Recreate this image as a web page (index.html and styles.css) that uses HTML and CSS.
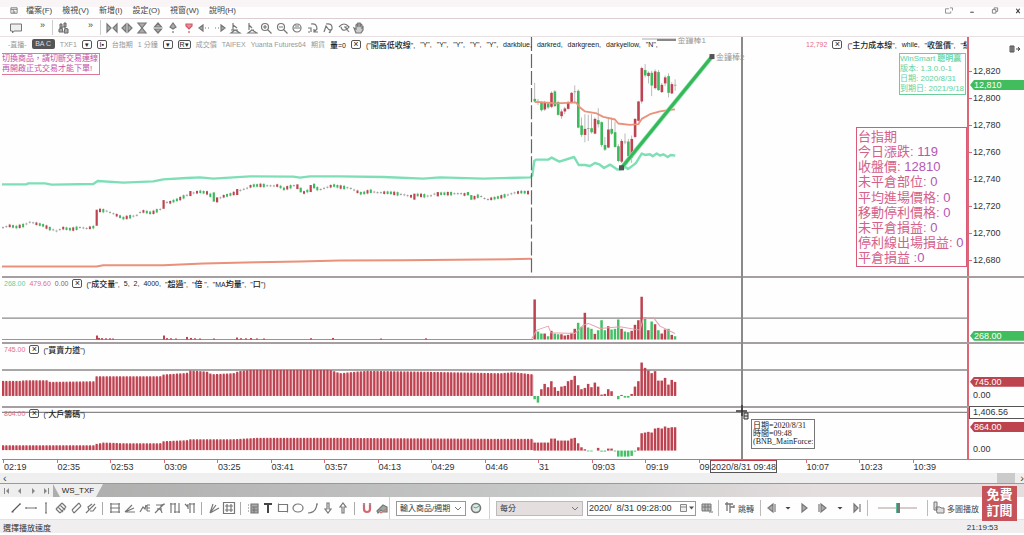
FILE: index.html
```html
<!DOCTYPE html>
<html lang="zh-Hant">
<head>
<meta charset="utf-8">
<title>WS_TXF</title>
<link rel="stylesheet" href="styles.css">
</head>
<body>
<div class="topband"></div>
<header class="menubar">
  <svg class="appicon" viewBox="0 0 10 9"><path d="M1 1h8v7H1zM1 3h8M4 3v5M6 5v3" fill="none" stroke="#666"/></svg>
  <nav class="menus">
    <button>檔案(F)</button><button>檢視(V)</button><button>新增(I)</button><button>設定(O)</button><button>視窗(W)</button><button>說明(H)</button>
  </nav>
  <div class="winbtns">
    <button aria-label="切換"><svg viewBox="0 0 10 8"><path d="M7 5v2H1V2h4M6 1h3v3" fill="none" stroke="#888"/></svg></button>
    <button aria-label="最小化"><svg viewBox="0 0 10 8"><path d="M3 6h4" stroke="#555" stroke-width="1.3"/></svg></button>
    <button aria-label="還原"><svg viewBox="0 0 10 8"><path d="M2 3h4v4H2zM4 3V1h4v4H6" fill="none" stroke="#777"/></svg></button>
    <button aria-label="關閉"><svg viewBox="0 0 10 8"><path d="M3 2l4 5M7 2L3 7" stroke="#444" stroke-width="1.3"/></svg></button>
  </div>
</header>
<div class="toolbar">
  <div class="tgroup short">
    <button aria-label="註解"><svg viewBox="0 0 14 14"><path d="M1.500 3h11v7H5l-1.500 2V10h-2z" fill="#eee" stroke="#777"/></svg></button><span>»</span>
  </div>
  <div class="tgroup short">
    <button aria-label="搜尋"><svg viewBox="0 0 14 14"><path d="M3 3h2v4H3zM7 2h2v4H7zM2 8l3-1 1 4H2zM8 7l3 1v4H7zM5 6h3" fill="#aaa" stroke="#666"/></svg></button><span>»</span>
  </div>
  <div class="tgroup icons" id="topicons"></div>
</div>

<main class="chart">
  <section class="pane price">
    <div class="plot">
      <svg id="price" viewBox="0 37 965 238" preserveAspectRatio="none"></svg>
      <div class="legend">
        <div class="lg">
          <span class="dim">-直播-</span><span class="badge">BA C</span><span class="dim">TXF1</span><button class="mini">▾</button><button class="mini">I▪</button><span class="dim">台指期</span><span class="dim">1 分鐘</span><button class="mini">▾</button><button class="mini wide">R▾</button><span class="dim">成交價</span><span class="dim">TAIFEX</span><span class="dim">Yuanta Futures64</span><span class="dim">期貨</span><span><b>量</b>=0</span><button class="mini x">×</button><span>("<b>開高低收線</b>",</span><span>"Y",</span><span>"Y",</span><span>"Y",</span><span>"Y",</span><span>"Y",</span><span>darkblue,</span><span>darkred,</span><span>darkgreen,</span><span>darkyellow,</span><span>"N",</span>
        </div>
        <div class="lg right">
          <span class="red">12,792</span><button class="mini x">×</button><span>("<b>主力成本線</b>",</span><span>while,</span><span>"<b>收盤價</b>",</span><span>"<b>紅</b>"</span>
        </div>
      </div>
      <div class="note">切換商品，請切斷交易連線<br>再開啟正式交易才能下單!</div>
      <div class="bar1">金鐘棒1</div>
      <div class="bar2">金鐘棒2</div>
      <div class="about"><p>WinSmart <b>聰明贏</b></p><p>版本: 1.3.0.0-1</p><p>日期: 2020/8/31</p><p>到期日: 2021/9/18</p></div>
      <ul class="info">
        <li>台指期</li><li>今日漲跌: <em>119</em></li><li>收盤價: <em>12810</em></li><li>未平倉部位: <em>0</em></li><li>平均進場價格: <em>0</em></li><li>移動停利價格: <em>0</em></li><li>未平倉損益: <em>0</em></li><li>停利線出場損益: <em>0</em></li><li>平倉損益 :<em>0</em></li>
      </ul>
    </div>
    <div class="scale">
      <svg class="pin" viewBox="0 0 12 8"><path d="M1 1h4v6H1zM3 1v6M7 4h4M9 2l2 2-2 2" fill="#999" stroke="#555"/></svg>
      <ol><li>12,820</li><li>12,800</li><li>12,780</li><li>12,760</li><li>12,740</li><li>12,720</li><li>12,700</li><li>12,680</li></ol>
      <span class="tag green t1">12,810</span>
    </div>
  </section>
  <section class="pane volume">
    <div class="plot">
      <svg id="volume" viewBox="0 278 965 64" preserveAspectRatio="none"></svg>
      <div class="legend sub"><span class="grn">268.00</span><span class="red">479.60</span><span class="mar">0.00</span><button class="mini x">×</button><span>("<b>成交量</b>",</span><span>5,</span><span>2,</span><span>4000,</span><span>"<b>超過</b>",</span><span>"<b>倍</b> ",</span><span>"MA<b>均量</b>",</span><span>"<b>口</b>")</span></div>
    </div>
    <div class="scale"><span class="tag green t2">268.00</span></div>
  </section>
  <section class="pane power">
    <div class="plot">
      <svg id="power" viewBox="0 344 965 62" preserveAspectRatio="none"></svg>
      <div class="legend sub"><span class="red">745.00</span><button class="mini x">×</button><span>("<b>買賣力道</b>")</span></div>
    </div>
    <div class="scale"><span class="tag crim t3">745.00</span><span class="zero z3">0.00</span></div>
  </section>
  <section class="pane force">
    <div class="plot">
      <svg id="force" viewBox="0 408 965 51" preserveAspectRatio="none"></svg>
      <div class="legend sub"><span class="red">864.00</span><button class="mini x">×</button><span>("<b>大戶籌碼</b>")</span></div>
    </div>
    <div class="scale"><span class="cursorval">1,406.56</span><span class="tag crim t4">864.00</span><span class="zero z4">0.00</span></div>
  </section>
  <div class="timeaxis">
    <ol><li>02:19</li><li>02:35</li><li>02:53</li><li>03:09</li><li>03:25</li><li>03:41</li><li>03:57</li><li>04:13</li><li>04:29</li><li>04:46</li><li>31</li><li>09:03</li><li>09:19</li><li>09</li><li></li><li>10:07</li><li>10:23</li><li>10:39</li></ol>
    <span class="cursortime">2020/8/31 09:48</span>
  </div>
  <div class="crosshair"></div>
  <svg class="cursor" viewBox="0 0 14 16"><path d="M0 6h11M6 0v11" stroke="#333" stroke-width="1.5"/><path d="M8 8h4v6H8zM8 11h4" fill="#ddd" stroke="#333"/></svg>
  <div class="tip">日期=2020/8/31<br>時間=09:48<br>(BNB_MainForce:</div>
</main>

<div class="scroller"><button aria-label="向左">‹</button><span class="thumb"></span><button aria-label="向右">›</button></div>
<div class="tabs">
  <div class="tabnav">
    <button aria-label="第一頁"><svg viewBox="0 0 8 8"><path d="M1.500 1v6" stroke="#888"/><path d="M6 1v6L3 4z" fill="#888"/></svg></button>
    <button aria-label="上一頁"><svg viewBox="0 0 8 8"><path d="M5 1v6L2 4z" fill="#888"/></svg></button>
    <button aria-label="下一頁"><svg viewBox="0 0 8 8"><path d="M3 1v6l3-3z" fill="#888"/></svg></button>
    <button aria-label="最後頁"><svg viewBox="0 0 8 8"><path d="M6.500 1v6" stroke="#888"/><path d="M2 1v6l3-3z" fill="#888"/></svg></button>
  </div>
  <button class="tab">WS_TXF</button>
</div>
<footer class="toolbar bottom">
  <div class="tgroup icons" id="drawicons"></div>
  <div class="tgroup sym">
    <select aria-label="商品"><option>輸入商品/週期</option></select>
    <button aria-label="時間"><svg viewBox="0 0 14 14"><circle cx="7" cy="7" r="4.500" fill="#dfe8e2" stroke="#777" stroke-width="1.600"/><path d="M4.500 6l2.500 1 3-2" fill="none" stroke="#4a9" /></svg></button>
  </div>
  <div class="tgroup play">
    <select class="step" aria-label="間隔"><option>每分</option></select>
    <span class="datebox"><input aria-label="日期時間" value="2020/  8/31 09:28:00"><svg viewBox="0 0 16 10"><path d="M1.500 1.500h6v7h-6zM1 4h7" fill="#eee" stroke="#888"/><path d="M10 3.500h5L12.500 6.500z" fill="#555"/></svg></span>
    <button aria-label="圖表"><svg viewBox="0 0 14 14"><path d="M2 3h9v7H2zM2 6h9M5 3v7M8 3v7M9 11h4" fill="#bbb" stroke="#777"/></svg></button>
    <button class="label sep"><svg viewBox="0 0 14 14"><path d="M2 3h8M4 1v9M7 3v3h4M7 6v6M11 4v3" fill="none" stroke="#777" stroke-width="1.300"/></svg>跳轉</button>
    <span class="transport" id="transport"></span>
    <input class="speed" type="range" aria-label="播放速度" value="50">
    <button class="label sep"><svg viewBox="0 0 14 14"><path d="M2 1h3v8H2zM4 6h4l1 1h3v5H5z" fill="#ddd" stroke="#777"/></svg>多圖播放</button>
  </div>
</footer>
<div class="status"><span>選擇播放速度</span><time>21:19:53</time></div>
<div class="endband"></div>
<a class="subscribe" href="#">免費<br>訂閱</a>
<script src="app.js"></script>
</body>
</html>
```
FILE: styles.css
```css
* { box-sizing: border-box; }
body { margin: 0; min-height: 100vh; display: flex; flex-direction: column; position: relative; background: #fefefe; color: #444; font-family: "Liberation Sans", "Noto Sans CJK TC", sans-serif; font-size: 8px; overflow-x: hidden; }
button { border: 0; padding: 0; background: none; color: inherit; font: inherit; display: inline-flex; align-items: center; justify-content: center; }
b { font-weight: 500; font-size: 8px; }
svg { display: block; }
ol, ul, p { list-style: none; margin: 0; padding: 0; }
.topband { height: 7px; background: #f9f5f7; flex: none; }
.endband { height: 2px; flex: none; }
.menubar { height: 12px; display: flex; align-items: flex-start; border-bottom: 1px solid #dccdd0; padding-left: 9px; flex: none; }
.appicon { width: 10px; height: 7px; margin-right: 7px; }
.menus { display: flex; gap: 10px; line-height: 8px; }
.menus button { height: 8px; line-height: 8px; }
.winbtns { margin-left: auto; display: flex; gap: 13px; padding-right: 1px; }
.winbtns svg { width: 10px; height: 7px; }
.toolbar { height: 18px; display: flex; align-items: center; border-bottom: 1px solid #e6e0e2; padding-left: 5px; flex: none; }
.tgroup { display: flex; align-items: center; }
.toolbar svg { width: 14px; height: 14px; }
.short { width: 48px; height: 15px; justify-content: space-between; align-items: flex-start; padding: 1px 7px 0 4px; border-right: 1px solid #ccc; }
.short span { font-size: 9px; line-height: 8px; }
.icons button { width: 15px; }
#topicons { padding-left: 3px; display: grid; grid-template-columns: repeat(17, 1fr); width: 266px; }
.chart { flex: 1; display: grid; grid-template-rows: 240fr 66fr 64fr 51fr 14px; position: relative; min-height: 435px; margin-left: 2px; }
.pane { display: grid; grid-template-columns: 1fr 57px; min-height: 0; border-bottom: 2px solid #a59fa1; }
.force { border-bottom: 0; }
.plot { position: relative; min-width: 0; overflow: hidden; }
.plot > svg { width: 100%; height: 100%; position: absolute; inset: 0; }
.scale { position: relative; border-left: 2px solid #df6675; font-size: 9px; color: #333; }
.scale ol { padding-top: 21px; }
.scale li { height: 27px; line-height: 27px; padding-left: 4px; position: relative; }
.scale li::before { content: ""; position: absolute; left: 0; top: 13px; width: 3px; height: 1px; background: #d67; }
.pin { position: absolute; right: 3px; top: 8px; width: 12px; height: 8px; }
.tag { position: absolute; left: 1px; right: 0; height: 10px; line-height: 10px; padding-left: 4px; color: #fff; clip-path: polygon(0 50%, 4px 0, 100% 0, 100% 100%, 4px 100%); }
.green { background: #42bd5d; }
.crim { background: #bd434f; }
.t1 { top: 43px; }
.t2 { bottom: 1px; }
.t3 { top: 33px; }
.t4 { top: 14px; }
.zero { position: absolute; left: 4px; line-height: 10px; }
.z3 { top: 46px; }
.z4 { top: 36px; }
.cursorval { position: absolute; left: 0; right: 0; top: -2px; height: 13px; line-height: 11px; padding-left: 3px; border: 1px solid #555; border-right: 0; background: #fff; }
.legend { position: absolute; left: 0; right: 0; top: 0; display: flex; justify-content: space-between; height: 14px; font-size: 7px; color: #222; white-space: pre; }
.lg { display: flex; align-items: center; gap: 5px; padding-left: 6px; }
.right { width: 161px; overflow: hidden; padding-left: 0; flex: none; }
.sub { justify-content: flex-start; align-items: center; gap: 4px; padding-left: 2px; height: 12px; }
.dim { color: #999; }
.red { color: #e46d8b; }
.grn { color: #5ed29a; }
.mar { color: #a05060; }
.badge { background: #555; color: #ddd; border-radius: 2px; width: 23px; height: 10px; line-height: 10px; text-align: center; }
.mini { width: 10px; height: 9px; border: 1px solid #555; border-radius: 2px; color: #222; font-size: 7px; line-height: 7px; flex: none; }
.x { font-size: 9px; }
.wide { width: 13px; }
.note { position: absolute; left: -1px; top: 16px; border: 1px solid #df7896; color: #c252a6; font-size: 8px; line-height: 10px; white-space: nowrap; padding-right: 1px; }
.bar1, .bar2 { position: absolute; color: #999; font-size: 8px; line-height: 8px; }
.bar1 { left: 70%; top: 0; }
.bar2 { left: 74%; top: 17px; }
.about { position: absolute; right: 1px; top: 16px; width: 67px; border: 1px solid #6ecb9c; color: #5fd29d; font-size: 8px; line-height: 10px; white-space: nowrap; }
.info { position: absolute; right: 0; top: 90px; width: 111px; height: 140px; display: flex; flex-direction: column; justify-content: space-between; border: 1px solid #d85a78; color: #d5608a; font-size: 13px; line-height: 15px; white-space: nowrap; padding: 1px 0 1px 1px; }
.info em { font-style: normal; color: #b556b4; }
.timeaxis { position: relative; border-top: 1px solid #df6675; font-size: 9px; color: #333; }
.timeaxis ol { display: grid; grid-template-columns: repeat(18, 1fr); margin-right: 58px; padding-left: 1px; line-height: 14px; }
.timeaxis li { padding-left: 1px; position: relative; }
.timeaxis li::before { content: ""; position: absolute; left: 0; top: 0; width: 1px; height: 3px; background: #d67; }
.cursortime { position: absolute; left: 708px; top: 0; height: 13px; line-height: 12px; padding: 0; border: 1px solid #555; border-top-color: #c34; background: #fff; white-space: nowrap; }
.crosshair { position: absolute; left: 739px; top: 0; bottom: 14px; width: 2px; background: #8c898a; }
.cursor { position: absolute; left: 734px; bottom: 52px; width: 14px; height: 16px; }
.tip { position: absolute; left: 749px; bottom: 24px; border: 1px solid #777; background: #fff; font-family: "Liberation Serif", "Noto Sans CJK TC", serif; font-size: 8px; line-height: 8px; padding: 2px 1px; color: #222; }
.scroller { height: 10px; display: flex; align-items: center; background: #f0efef; padding: 0 0 0 3px; font-size: 11px; line-height: 8px; flex: none; }
.thumb { margin-left: auto; width: 18px; height: 10px; background: #cbcbcb; margin-right: 5px; }
.tabs { height: 14px; display: flex; border-top: 1px solid #999; background: linear-gradient(90deg, #aaaaa9, #c8cac9 55%, #e5dedf 80%, #e5dedf); flex: none; }
.tabnav { width: 53px; background: #efeeee; display: flex; justify-content: space-around; align-items: center; }
.tabnav svg { width: 8px; height: 8px; }
.tab { width: 50px; background: #eee; clip-path: polygon(0 0, 100% 0, calc(100% - 7px) 100%, 7px 100%); font-size: 8px; color: #222; }
.bottom { height: 23px; padding-left: 4px; background: #fefefe; }
#drawicons { width: 386px; border-right: 1px solid #ddcdd0; height: 22px; padding-left: 4px; }
#drawicons button { width: 15px; flex: none; }
#drawicons i { width: 1px; height: 13px; background: #aaa; margin: 0 4px; }
.sym { padding: 0 6px; gap: 3px; border-right: 1px solid #ddcdd0; height: 22px; flex: none; }
select { appearance: none; width: 70px; height: 15px; padding: 0 0 0 3px; border: 1px solid #999; border-radius: 0; font: 8px "Liberation Sans", "Noto Sans CJK TC", sans-serif; color: #333; background: #fff url("data:image/svg+xml,%3Csvg xmlns='http://www.w3.org/2000/svg' width='6' height='5'%3E%3Cpath d='M0 1l3 3 3-3' fill='none' stroke='%23777'/%3E%3C/svg%3E") right 4px center / 6px 5px no-repeat; }
.step { width: 87px; background-color: #e5dedf; border-color: #bbb; }
.play { flex: 1; gap: 4px; padding: 0 45px 0 6px; min-width: 0; }
.datebox { display: flex; align-items: center; width: 109px; height: 15px; border: 1px solid #999; flex: none; }
.datebox input { flex: 1; min-width: 0; border: 0; padding: 0 0 0 1px; font: 9px "Liberation Sans", sans-serif; color: #333; background: none; height: 13px; }
.datebox svg { width: 16px; height: 10px; }
.label { gap: 1px; white-space: nowrap; flex: none; }
.sep { border-left: 1px solid #bbb; height: 16px; padding-left: 4px; }
.transport { display: flex; gap: 2px; align-items: center; border-left: 1px solid #bbb; border-right: 1px solid #bbb; height: 16px; padding: 0 3px; width: 108px; justify-content: space-between; margin-left: 2px; }
.speed { appearance: none; flex: 1; min-width: 30px; max-width: 60px; height: 12px; margin: 0 6px; background: linear-gradient(#d5cccc, #d5cccc) center / 100% 2px no-repeat; }
.speed::-webkit-slider-thumb { appearance: none; width: 4px; height: 10px; background: #777; border-left: 1px solid #5b9; }
.status { height: 13px; display: flex; justify-content: space-between; align-items: center; background: #f0eeef; padding: 2px 26px 0 3px; color: #333; flex: none; }
.subscribe { position: absolute; right: 7px; bottom: 14px; width: 35px; height: 35px; background: #c65359; color: #fff; font-size: 13px; font-weight: 700; line-height: 16px; text-align: center; text-decoration: none; padding-top: 1px; }
```
FILE: app.js
```js
const RED = '#bd4350', GREEN = '#3cb95a', GREY = '#999', AQUA = '#7edfb6', ORANGE = '#e9917a';
const step = 3.344;

// Linear interpolation along a list of x,y knots.
function at(knots, x) {
  for (let i = 2; i < knots.length; i += 2) {
    if (x <= knots[i]) {
      const t = (x - knots[i - 2]) / (knots[i] - knots[i - 2]);
      return knots[i - 1] + t * (knots[i + 1] - knots[i - 1]);
    }
  }
  return knots[knots.length - 1];
}
const rect = (x, y, w, h, c) => `<rect x="${x.toFixed(1)}" y="${y.toFixed(1)}" width="${w}" height="${Math.max(h, 0.8).toFixed(1)}" fill="${c}"/>`;
const line = (x1, y1, x2, y2, c, w, extra = '') => `<path d="M${x1} ${y1}L${x2} ${y2}" stroke="${c}" stroke-width="${w}" ${extra}/>`;
// Curves are stored at three units per pixel.
function curve(points, dx, dy, color, width) {
  let d = '';
  for (let i = 0; i < points.length; i += 2) d += (i ? 'L' : 'M') + (points[i] / 3 + dx).toFixed(1) + ' ' + (points[i + 1] / 3 + dy).toFixed(1);
  return `<path d="${d}" fill="none" stroke="${color}" stroke-width="${width}" stroke-linejoin="round"/>`;
}
const draw = (id, html) => { document.getElementById(id).innerHTML = `<g transform="translate(-2 0)">${html}</g>`; };

const night = [8,202,28,196,50,200,70,195,90,185,110,190,130,195,150,205,170,212,190,203,215,207,240,201,260,204,285,199,292,165,300,150,320,152,340,160,370,173,410,165,425,152,455,158,485,145,495,126,510,126,540,115,570,100,600,94,625,98,640,115,650,118,670,108,700,100,715,92,740,84,755,76,780,75,820,77,835,75,850,86,885,75,900,100,920,94,935,78,960,88,1000,75,1020,80,1050,83,1070,93,1085,100,1110,92,1130,97,1170,97,1210,103,1232,108,1245,103,1290,108,1305,100,1340,100,1390,100,1405,110,1425,112,1438,105,1460,118,1500,110,1520,105,1540,98,1565,95,1590,97];
const big = {28:[148,196,RED],48:[119,145,RED],56:[92,107,RED],63:[96,124,GREEN],64:[111,126,RED],70:[86,104,RED],88:[72,86,RED],89:[82,96,GREEN],92:[74,95,RED],93:[70,84,GREEN],123:[100,118,RED],130:[95,108,RED],139:[95,105,GREEN],140:[104,118,GREEN]};
const day = [[176,184,128,186,'g'],[184,188,176,195,'n'],[186,210,184,214,'g'],[186,208,182,212,'r'],[190,202,185,206,'g'],[158,200,154,204,'r'],[154,198,150,200,'g'],[186,224,182,226,'g'],[214,228,208,236,'r'],[205,214,200,222,'r'],[186,206,182,208,'r'],[158,188,156,190,'r'],[154,156,136,190,'n'],[152,262,148,264,'g'],[256,284,232,290,'g'],[266,284,222,306,'r'],[264,266,224,302,'n'],[264,276,222,280,'g'],[236,280,232,282,'r'],[240,252,204,262,'g'],[246,314,244,320,'g'],[314,328,290,332,'g'],[268,322,232,324,'r'],[266,280,232,284,'g'],[276,320,244,322,'g'],[318,362,312,366,'g'],[302,364,296,368,'r'],[304,306,280,312,'n'],[304,348,296,352,'g'],[296,352,286,368,'r'],[236,290,234,294,'r'],[184,242,182,244,'r'],[84,184,80,190,'r'],[90,106,72,112,'g'],[98,108,94,130,'r'],[98,136,92,168,'g'],[94,144,88,148,'r'],[96,150,90,152,'g'],[134,156,128,158,'r'],[112,130,106,138,'r'],[108,158,100,172,'g'],[132,160,126,162,'r'],[134,136,118,152,'n']];
const shade = { r: RED, g: GREEN, n: GREY };

let p = '';
for (let i = 0; i < 158; i++) {
  const x = 3 + i * step, y = at(night, x * 3) / 3 + 160;
  if (big[i]) {
    const [t, b, c] = big[i];
    p += rect(x - 1, t / 3 + 160, 2.2, (b - t) / 3, c);
    continue;
  }
  const k = (i * 7 + (i >> 2) * 5) % 6, h = k < 2 ? 1 : k < 4 ? 2.6 : 3.4;
  p += rect(x - .3, y - h / 2 - 1, .7, h + 2, '#ccc') + rect(x - 1, y - h / 2, 2, h, k < 2 ? GREY : k % 2 ? GREEN : RED);
}
p += curve([5,72,80,72,85,69,135,69,155,73,280,71,293,62,370,67,460,63,490,57,560,53,600,51,640,55,750,48,880,49,900,52,930,48,1020,48,1150,50,1270,55,1320,51,1450,55,1592,51,1597,45,1603,2,1608,-2,1645,-2,1655,-8,1678,4,1722,-10,1736,14,1755,14,1770,17,1785,8,1798,12,1812,23,1830,13,1852,28,1865,26,1876,20,1884,26,1898,16,1908,8,1925,-20,1935,-16,1950,-18,1958,-12,1970,-20,1980,-14,1990,-18,2003,-10,2012,-16,2026,-14], 0, 160, AQUA, 2.4);
p += curve([5,318,290,318,310,314,490,314,610,309,770,305,900,303,1020,300,1210,299,1450,297,1595,295], 0, 160, ORANGE, 2);
day.forEach(([t, b, wt, wb, c], i) => {
  const x = 534.7 + i * step;
  p += rect(x - .4, wt / 3 + 40, .8, (wb - wt) / 3, '#aaa') + rect(x - 1.2, t / 3 + 40, 2.6, (b - t) / 3, shade[c]);
});
p += curve([104,186,120,186,150,188,170,190,200,188,228,187,240,202,255,214,290,220,310,230,345,238,355,250,390,254,415,252,425,236,450,222,480,214,505,210,525,208], 500, 40, ORANGE, 1.8);
p += line(531.5, 37, 531.5, 275, '#666', 1.2, 'stroke-dasharray="14 3"');
p += line(621.7, 167.3, 712, 56.5, '#7be0a5', 4.4) + line(621.7, 167.3, 712, 56.5, '#37b758', 3);
p += rect(619, 165, 5, 5, '#555') + rect(709.5, 54, 5, 5, '#555') + line(642, 39, 676, 39, '#aaa', 1) + line(657, 40, 676, 40, '#888', 2);
draw('price', p);

function bars(list, base, color) {
  return list.map((v, i) => {
    const h = Math.abs(v) / 3;
    return h ? rect(533.4 + i * step, v > 0 ? base - h : base, 2.5, h, color(v, i)) : '';
  }).join('');
}
const vol = [120,24,18,18,10,26,18,16,16,12,14,20,32,50,38,80,36,32,17,28,58,28,40,30,32,60,32,24,22,26,44,58,128,66,28,54,46,28,18,30,32,14,10];
const volUp = 'rggrgrggrrrrrggrggrgggrgggrggrrrrgrgrgrrgrg';
let v = line(2, 318, 968, 318, '#8b8889', 1.4) + line(2, 339.4, 533, 339.4, '#dd7582', 1);
[[96,4],[98,1.6],[101,1.4],[105,1.2],[109,1.2],[112,1],[163,4],[166,1.4],[170,1.2],[175,1],[186,2.6],[190,1.6],[194,1.2],[199,1],[213,1],[236,2],[240,1.3],[245,1.2],[250,1.5],[256,1.1],[263,1],[310,1.3],[332,1.6],[380,1],[425,1.2]].forEach(([x, h]) => { v += rect(x, 339.4 - h, 2, h, RED); });
v += bars(vol, 339.4, (n, i) => volUp[i] === 'g' ? '#46bf66' : RED);
v += curve([95,176,110,150,145,138,153,158,225,160,250,135,265,130,300,145,360,140,420,150,430,115,460,112,480,138,525,160], 500, 280, '#e3a3ae', 1);
draw('volume', v);

function nightBars(knots, base) {
  let s = '';
  for (let i = 0; i < 159; i++) {
    const x = 3 + i * step, top = at(knots, x * 3) / 3 + 280;
    s += rect(x - 1.2, top + .5, step, base - top - .5, '#efc3ca') + rect(x - 1, top - .5, 2.1, base - top + .5, RED);
  }
  return s;
}
const dayColor = n => n > 0 ? RED : '#46bf66';
const power = [8,304,60,304,75,302,140,302,150,307,280,305,290,290,480,290,490,285,560,280,570,273,620,276,635,284,700,281,715,275,750,271,990,271,1020,281,1060,277,1100,274,1300,277,1500,281,1540,278,1595,284];
draw('power', line(2, 370, 968, 370, '#8b8889', 1.4) + nightBars(power, 395.8) +
  bars([-10,-20,20,36,26,44,26,15,28,30,44,48,60,32,20,24,36,26,40,28,4,6,20,14,0,-10,3,-5,-5,6,28,44,100,84,76,68,74,46,46,54,34,48,42], 395.8, dayColor));
const force = [8,497,280,497,290,493,310,489,370,491,480,491,490,485,560,482,570,479,700,479,770,475,1020,475,1500,478,1595,478];
draw('force', line(2, 412.4, 968, 412.4, '#8b8889', 1.4) + nightBars(force, 450) +
  bars([24,24,24,24,24,36,36,30,30,30,30,36,38,22,10,4,-2,-2,0,8,-3,-3,6,6,-2,-18,-18,-18,-18,-16,-3,10,52,54,56,54,66,68,66,72,68,70,70], 450.5, dayColor));

// Icon buttons: [label, markup]; null is a divider.
const svg = body => `<svg viewBox="0 0 14 14" fill="none" stroke="#777" stroke-width="1.200">${body}</svg>`;
const fill = (list, id) => { document.getElementById(id).innerHTML = list.map(x => x ? `<button aria-label="${x[0]}">${svg(x[1])}</button>` : '<i></i>').join(''); };
const f = 'fill="#aaa"';
fill([
  ['壓縮', `<path d="M2 3v8l4-4zM12 3v8L8 7z" ${f}/>`],
  ['展開', `<path d="M6 3v8L2 7zM8 3v8l4-4z" ${f}/>`],
  ['壓低', `<path d="M3 2h8L7 7zM3 12h8L7 7zM3 2h8M3 12h8" ${f}/>`],
  ['拉高', `<path d="M3.500 6L7 2l3.500 4zM3.500 8L7 12l3.500-4z" ${f}/>`],
  ['上移', `<path d="M4 6l3-4 3 4-3 2zM7 10v2" ${f}/>`],
  ['下移', '<path d="M4 3h6v2L7 8 4 5zM7 10v2" stroke="#d55866" fill="#e88a94"/>'],
  ['左移', `<path d="M2 7l4-3v6zM8 7h1M11 7h1" ${f}/>`],
  ['右移', `<path d="M12 7L8 4v6zM6 7H5M3 7H2" ${f}/>`],
  ['縮小間距', '<path d="M5 2v7M5 4l4 3M3 12l4-3 5 3zM3 9h7"/>'],
  ['放大間距', '<path d="M5 2v7M5 4l3 3M4 12l4-3 5 3zM7 9h3"/>'],
  ['放大', `<circle cx="6" cy="6" r="3.500"/><path d="M8.500 8.500l4 4M4 6h4M6 4v4"/>`],
  ['縮小', `<circle cx="6" cy="6" r="3.500"/><path d="M8.500 8.500l4 4M4 6h4"/>`],
  ['重設', `<circle cx="7" cy="7" r="4"/><path d="M4 7h6M5 5h4"/>`],
  ['區間一', `<path d="M2 11h2M2 7h3v4M5 3q6-1 6 5l-3 3M8 8v3h4"/>`],
  ['區間二', `<path d="M3 11l2-6 3 4M5 3q7-1 6 5l-3 4M9 8v4"/>`],
  ['檢視', `<path d="M2 6q5-6 10 0-2 3-4 3M4 6q1 4 4 3M8 6l4 5M7 6h3"/>`],
  ['手形', `<path d="M4 12L2 7l2 1V4l1-1 1 3V2h2v4l1-3 1 1v3l1-1v3l-2 3z" fill="#ccc"/>`]
], 'topicons');
fill([
  ['趨勢線', '<path d="M3 11l8-8M2.500 11h2M10 3h2" stroke="#555"/>'],
  ['水平線', '<path d="M2 7h10M2 6v2M12 6v2"/>'],
  ['垂直線', '<path d="M7 2v10M6 2h2M6 12h2"/>'],
  ['通道', '<path d="M2 8l6-6M6 12l6-6M4 6l5 5M6 4l5 5M2 8l4 4M8 2l4 4"/>'],
  ['平行', '<path d="M3 9l7-7M5 12l7-7M3 9l2 3M10 2l2 3"/>'],
  ['叉形', '<path d="M2 12l9-9M5 9L4 6l4-3M6 10h3l3-4"/>'],
  null,
  ['水平回撤', '<path d="M2 3h10M2 7h10M2 11h10M3 2v10M11 2v10"/>'],
  ['扇形', '<path d="M2 11l7-7M2 11l9-4M2 11h10"/>'],
  ['波浪', '<path d="M2 11l3-5 2 2 1-4M9 4h3M9 7h3M9 10h3M9 4v6"/>'],
  ['江恩', '<path d="M2 12l9-9M3 4h5v6M4 8q4-1 5 4M8 4l4-1"/>'],
  ['時間區', '<path d="M3 2v10M7 2v10M11 2v10M2 3h6M6 11h6"/>'],
  ['時間比例', '<path d="M2 3l3 3M7 2v10M11 2v10M5 3v5M6 3h6"/>'],
  null,
  ['射線', '<path d="M3 12l3-9M3 12l6-8M3 12l9-5"/>'],
  ['格線', '<path d="M1.500 1.500h11v11h-11zM3 5h8M3 9h8M5 3v8M9 3v8"/>'],
  null,
  ['標籤', `<path d="M2 4h1M2 7h1M2 10h1M5 3h7v9H5zM6 6h5M6 9h5M8 6v6" ${f}/>`],
  ['文字', '<path d="M3 3h8M7 3v9" stroke="#444" stroke-width="2"/>'],
  ['矩形', '<path d="M2.500 3.500h9v7h-9zM2 3h1M11 11h1"/>'],
  ['橢圓', '<ellipse cx="7" cy="7" rx="5" ry="4"/>'],
  ['弧線', '<path d="M2 12q8 0 9-9M10 3h2"/>'],
  ['下箭頭', '<path d="M6 2h2v6h2l-3 4-3-4h2z"/>'],
  ['上箭頭', '<path d="M6 12h2V6h2L7 2 4 6h2z"/>'],
  null,
  ['磁鐵', '<path d="M4 2v6q0 3 3 3t3-3V2" stroke="#d46673" stroke-width="2.200"/><path d="M3 3h2M9 3h2" stroke="#999" stroke-width="2"/>'],
  ['清除', '<path d="M2 10l6-6 4 2v5H8l-2-2-3 3z" fill="#9aaba1"/><path d="M4 10l2 2 5-4" stroke="#c77"/>']
], 'drawicons');
const tri = '<path d="M4.500 6h5L7 8.500z" fill="#444" stroke="none"/>';
fill([
  ['後退', `<path d="M9 3v8L4 7zM11 3v8" ${f}/>`], ['後退選項', tri],
  ['播放', `<path d="M4 3v8l5-4z" ${f}/>`],
  ['前進', `<path d="M3 3v8M5 3v8l5-4z" ${f}/>`], ['前進選項', tri],
  ['結尾', `<path d="M4 3v8l4-4zM10 3v8" ${f}/>`]
], 'transport');
```
